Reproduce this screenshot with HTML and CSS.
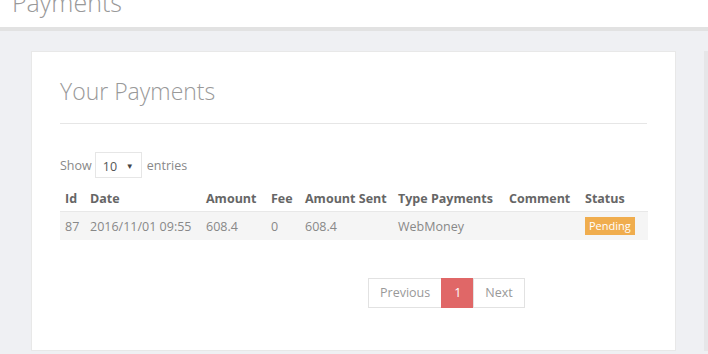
FILE: index.html
```html
<!DOCTYPE html>
<html lang="en">
<head>
    <meta charset="UTF-8">
    <title>Payments</title>
    <link rel="stylesheet" href="styles.css">
</head>
<body>
    <header class="page-header">
        <h1>Payments</h1>
    </header>

    <div class="page-body">
        <div class="card">
            <h2>Your Payments</h2>

            <div class="length">
                <span>Show</span>
                <div class="select">
                    <span>10</span>
                    <span class="caret">&#9660;</span>
                </div>
                <span>entries</span>
            </div>

            <table class="payments">
                <thead>
                    <tr>
                        <th class="col-id">Id</th>
                        <th class="col-date">Date</th>
                        <th class="col-amount">Amount</th>
                        <th class="col-fee">Fee</th>
                        <th class="col-sent">Amount Sent</th>
                        <th class="col-type">Type Payments</th>
                        <th class="col-comment">Comment</th>
                        <th class="col-status">Status</th>
                    </tr>
                </thead>
                <tbody>
                    <tr>
                        <td>87</td>
                        <td>2016/11/01 09:55</td>
                        <td>608.4</td>
                        <td>0</td>
                        <td>608.4</td>
                        <td>WebMoney</td>
                        <td></td>
                        <td><span class="badge pending">Pending</span></td>
                    </tr>
                </tbody>
            </table>

            <div class="pager">
                <a class="page-link">Previous</a>
                <a class="page-link active">1</a>
                <a class="page-link">Next</a>
            </div>
        </div>
        <div class="card side"></div>
    </div>
</body>
</html>
```

FILE: styles.css
```css
:root {
    --bg-color: #eff0f3;
    --border-color: #e6e6e6;
    --muted-color: #999;
    --text-color: #888;
    --head-color: #666;
    --warning-color: #f0ad4e;
    --active-color: #e06767;
}

* {
    box-sizing: border-box;
    margin: 0;
    padding: 0;
}

body {
    font-family: 'Open Sans', 'Liberation Sans', sans-serif;
    font-size: 12.5px;
    color: var(--text-color);
    background-color: var(--bg-color);
    height: 354px;
    overflow: hidden;
}

.page-header {
    background: white;
    height: 31px;
    border-bottom: 4px solid #e2e2e2;
    padding-left: 12px;
    overflow: hidden;
}

.page-header h1 {
    font-size: 25px;
    font-weight: 300;
    color: var(--muted-color);
    line-height: 25px;
    margin-top: -10px;
}

.page-body {
    display: flex;
    gap: 28px;
    padding: 20px 0 0 31px;
}

.card {
    background: white;
    border: 1px solid #e8e8e8;
    width: 645px;
    flex-shrink: 0;
    height: 300px;
    padding: 22px 28px 0 28px;
}

.card.side {
    width: 20px;
    background: #e6e6e8;
    border: none;
    padding: 0;
}

.card h2 {
    font-size: 23px;
    font-weight: 300;
    color: var(--muted-color);
    line-height: 34px;
    padding-bottom: 15px;
    border-bottom: 1px solid var(--border-color);
}

.length {
    display: flex;
    align-items: center;
    gap: 3px;
    margin-top: 28px;
    color: var(--text-color);
}

.select {
    display: flex;
    align-items: center;
    justify-content: space-between;
    width: 47px;
    height: 26px;
    padding: 3px 7px 0 7px;
    margin-right: 2px;
    border: 1px solid var(--border-color);
    color: #555;
}

.caret {
    font-size: 8px;
    color: #444;
    margin-top: -2px;
}

.payments {
    border-collapse: collapse;
    margin-top: 7px;
    width: 588px;
}

.payments th,
.payments td {
    text-align: left;
    padding: 5px 5px;
    line-height: 17px;
    white-space: nowrap;
}

.payments th {
    color: var(--head-color);
    font-weight: 700;
    padding-bottom: 4px;
}

.payments tbody tr {
    background: #f5f5f5;
    border-top: 1px solid #e8e8e8;
}

.payments td {
    color: var(--text-color);
}

.col-id { width: 25px; }
.col-date { width: 116px; }
.col-amount { width: 65px; }
.col-fee { width: 34px; }
.col-sent { width: 93px; }
.col-type { width: 111px; }
.col-comment { width: 76px; }

.badge {
    display: inline-block;
    font-size: 11px;
    line-height: 18px;
    padding: 0 4px;
    color: white;
}

.badge.pending {
    background-color: var(--warning-color);
}

.pager {
    display: flex;
    margin-top: 38px;
    margin-left: 308px;
}

.page-link {
    display: block;
    height: 30px;
    line-height: 28px;
    padding: 0 11px;
    border: 1px solid #e2e2e2;
    color: var(--muted-color);
    font-size: 12.5px;
}

.page-link + .page-link {
    margin-left: -1px;
}

.page-link.active {
    background: var(--active-color);
    border-color: var(--active-color);
    color: white;
    padding: 0 12px;
}
```
